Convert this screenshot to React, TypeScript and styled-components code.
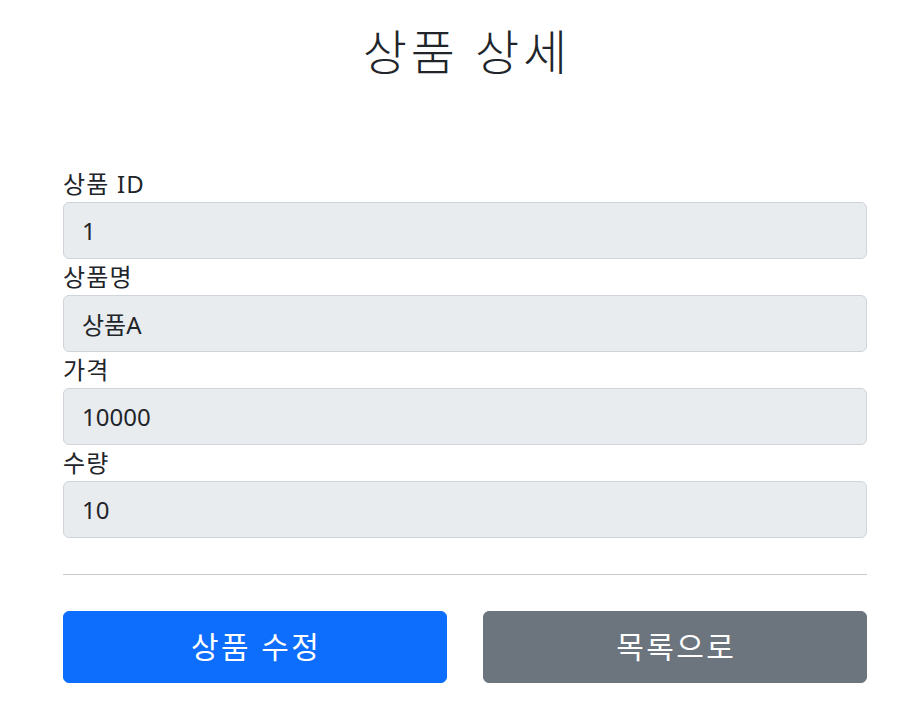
import React from "react";
import styled, { createGlobalStyle } from "styled-components";

const Global = createGlobalStyle`
  html, body { margin: 0; padding: 0; background: #fff; }
  body {
    font-family: "Noto Sans", "Noto Sans CJK KR", sans-serif;
    color: #212529;
    font-size: 24px;
    line-height: 1.5;
  }
  * { box-sizing: border-box; }
`;

const Container = styled.div`
  width: 804px;
  margin-left: 63px;
`;

const Header = styled.div`
  padding-top: 23px;
  padding-bottom: 85px;
  text-align: center;
`;

const Title = styled.h2`
  margin: 0;
  font-size: 48px;
  font-weight: 300;
  line-height: 1.2;
  letter-spacing: 0.08em;
  padding-left: 0.08em;
`;

const Field = styled.div`
  display: flex;
  flex-direction: column;
`;

const Label = styled.label`
  display: block;
  font-size: 24px;
  line-height: 36px;
  letter-spacing: 0.05em;
`;

const Input = styled.input`
  display: block;
  width: 100%;
  height: 57px;
  padding: 9px 18px;
  font-family: inherit;
  font-size: 24px;
  line-height: 36px;
  color: #212529;
  background: #e9ecef;
  border: 1px solid #ced4da;
  border-radius: 6px;
  opacity: 1;
  &:disabled { color: #212529; -webkit-text-fill-color: #212529; }
`;

const Divider = styled.hr`
  margin: 36px 0;
  border: 0;
  border-top: 1px solid #c8c9ca;
  height: 0;
`;

const ButtonRow = styled.div`
  display: grid;
  grid-template-columns: 1fr 1fr;
  column-gap: 36px;
`;

const Button = styled.button<{ $variant: "primary" | "secondary" }>`
  height: 72px;
  border: 1px solid ${(p) => (p.$variant === "primary" ? "#0d6efd" : "#6c757d")};
  background: ${(p) => (p.$variant === "primary" ? "#0d6efd" : "#6c757d")};
  color: #fff;
  border-radius: 6px;
  font-family: inherit;
  font-size: 30px;
  line-height: 45px;
  letter-spacing: 0.08em;
  padding: 12px 24px 12px calc(24px + 0.08em);
  cursor: pointer;
`;

const fields = [
  { label: "상품 ID", value: "1" },
  { label: "상품명", value: "상품A" },
  { label: "가격", value: "10000" },
  { label: "수량", value: "10" },
];

export default function App() {
  return (
    <>
      <Global />
      <Container>
        <Header>
          <Title>상품 상세</Title>
        </Header>
        {fields.map((f) => (
          <Field key={f.label}>
            <Label>{f.label}</Label>
            <Input value={f.value} disabled readOnly />
          </Field>
        ))}
        <Divider />
        <ButtonRow>
          <Button $variant="primary" type="button">상품 수정</Button>
          <Button $variant="secondary" type="button">목록으로</Button>
        </ButtonRow>
      </Container>
    </>
  );
}
